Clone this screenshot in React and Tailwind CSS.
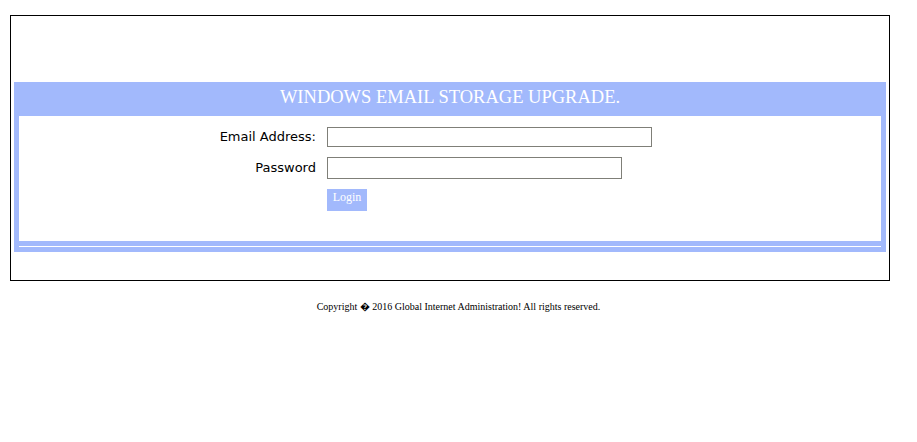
export default function App() {
  return (
    <div className="bg-white min-h-[442px] pt-[15px]">
      <div className="ml-[10px] w-[880px] border border-black px-[3px] pt-[66px] pb-[28px]">
        <div className="bg-[#a2b9fc] px-[5px] pb-[5px]">
          <div className="h-[34px] pb-[3px] flex items-center justify-center text-white text-[18.5px] font-['Liberation_Serif',serif]">
            WINDOWS EMAIL STORAGE UPGRADE.
          </div>
          <div className="bg-white h-[125px] pt-[11px] font-['DejaVu_Sans',sans-serif] text-[13px] text-black">
            <div className="flex items-center">
              <label className="w-[297px] text-right">Email Address:</label>
              <input type="text" className="ml-[11px] w-[325px] h-[20px] border border-[#7f7f78] outline-none px-1" />
            </div>
            <div className="flex items-center mt-[10px]">
              <label className="w-[297px] text-right">Password</label>
              <input type="password" className="ml-[11px] w-[295px] h-[22px] border border-[#7f7f78] outline-none px-1" />
            </div>
            <div className="flex mt-[10px]">
              <div className="w-[297px]" />
              <button className="ml-[11px] w-[40px] h-[22px] flex items-start justify-center pt-[2px] leading-none bg-[#a2b9fc] text-white text-[12px] font-['Liberation_Serif',serif]">
                Login
              </button>
            </div>
          </div>
          <div className="mt-[5px] h-px bg-white" />
        </div>
      </div>
      <p className="mt-[19px] text-center text-[10px] leading-[13px] text-black font-['Liberation_Serif',serif]">
        Copyright � 2016 Global Internet Administration! All rights reserved.
      </p>
    </div>
  );
}
